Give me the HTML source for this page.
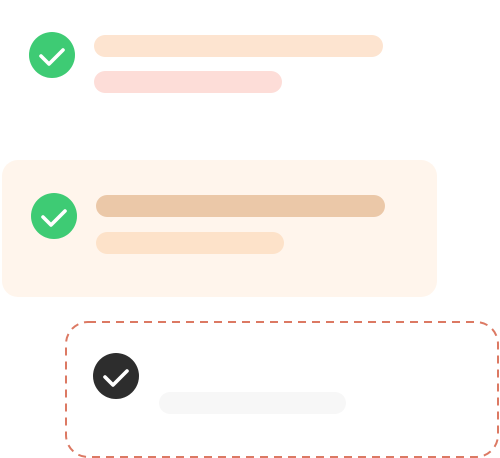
<!DOCTYPE html>
<html><head><style>
body{margin:0;width:500px;height:458px;background:#fff;position:relative;overflow:hidden}
div{position:absolute}
.bar{height:22px;border-radius:11px}
</style></head><body>
<svg width="500" height="458" style="position:absolute;left:0;top:0">
<circle cx="52" cy="55" r="23" fill="#3ecb74"/>
<path d="M41 56 L49 64 L63 50" stroke="#fff" stroke-width="3.6" fill="none" stroke-linecap="round" stroke-linejoin="round"/>
</svg>
<div class="bar" style="left:94px;top:35px;width:289px;background:#fde4d0"></div>
<div class="bar" style="left:94px;top:71px;width:188px;background:#fdddd8"></div>
<div style="left:2px;top:160px;width:435px;height:137px;border-radius:16px;background:#fff5ec"></div>
<div class="bar" style="left:96px;top:195px;width:289px;background:#ebc8a8"></div>
<div class="bar" style="left:96px;top:232px;width:188px;background:#fde2c9"></div>
<div class="bar" style="left:159px;top:392px;width:187px;background:#f7f7f7"></div>
<svg width="500" height="458" style="position:absolute;left:0;top:0">
<rect x="66" y="322" width="432" height="135" rx="22" fill="none" stroke="#dc7963" stroke-width="2" stroke-dasharray="8 6"/>
<circle cx="54" cy="216" r="23" fill="#3ecb74"/>
<path d="M43 217 L51 225 L65 211" stroke="#fff" stroke-width="3.6" fill="none" stroke-linecap="round" stroke-linejoin="round"/>
<circle cx="116" cy="376" r="23" fill="#2d2d2d"/>
<path d="M105 377 L113 385 L127 371" stroke="#fff" stroke-width="3.6" fill="none" stroke-linecap="round" stroke-linejoin="round"/>
</svg>
</body></html>
